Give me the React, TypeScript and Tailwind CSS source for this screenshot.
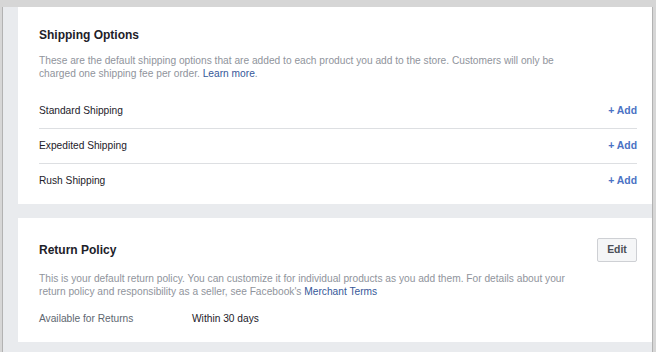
import React from "react";

const shippingRows = ["Standard Shipping", "Expedited Shipping", "Rush Shipping"];

function ShippingCard() {
  return (
    <div className="ml-[15px] mt-[7px] bg-white pl-[21px] pr-[15px] pt-[21px] pb-[6px]">
      <h2 className="text-[12px] leading-[14px] font-bold text-[#1d2129]">Shipping Options</h2>
      <p className="mt-[12px] max-w-[540px] text-[10.2px] leading-[13px] text-[#90949c]">
        These are the default shipping options that are added to each product you add to the store.
        Customers will only be charged one shipping fee per order.{" "}
        <a className="text-[#365899]">Learn more</a>.
      </p>
      <div className="mt-[13px] flex flex-col">
        {shippingRows.map((name, i) => (
          <div
            key={name}
            className={
              i === 0
                ? "flex h-[35px] items-center justify-between"
                : "flex h-[35px] items-center justify-between border-t border-[#dddfe2]"
            }
          >
            <span className="text-[10.2px] text-[#1d2129]">{name}</span>
            <span className="text-[10.4px] font-bold text-[#4a72c4]">+ Add</span>
          </div>
        ))}
      </div>
    </div>
  );
}

function ReturnPolicyCard() {
  return (
    <div className="ml-[15px] mt-[14px] bg-white pl-[21px] pr-[15px] pt-[20px] pb-[17px]">
      <div className="flex h-[24px] items-center justify-between">
        <h2 className="text-[12px] leading-[14px] font-bold text-[#1d2129]">Return Policy</h2>
        <button className="flex h-[24px] w-[40px] items-center justify-center rounded-[2px] border border-[#ced0d4] bg-[#f5f6f7] text-[10.4px] font-bold text-[#4b4f56]">
          Edit
        </button>
      </div>
      <p className="mt-[10px] max-w-[540px] text-[10.2px] leading-[13px] text-[#90949c]">
        This is your default return policy. You can customize it for individual products as you add
        them. For details about your return policy and responsibility as a seller, see Facebook's{" "}
        <a className="text-[#365899]">Merchant Terms</a>
      </p>
      <div className="mt-[14px] flex h-[13px] items-center text-[10.2px]">
        <span className="w-[153px] text-[#606770]">Available for Returns</span>
        <span className="text-[#1d2129]">Within 30 days</span>
      </div>
    </div>
  );
}

export default function App() {
  return (
    <div
      className="h-[352px] w-[656px] overflow-hidden bg-[#d6d6d6] pl-[2px] pr-[3px] pb-[3px]"
      style={{ fontFamily: '"Liberation Sans", Arial, sans-serif' }}
    >
      <div className="h-full border-x border-b border-[#b2b2b2] bg-[#e9ebee]">
        <ShippingCard />
        <ReturnPolicyCard />
      </div>
    </div>
  );
}
